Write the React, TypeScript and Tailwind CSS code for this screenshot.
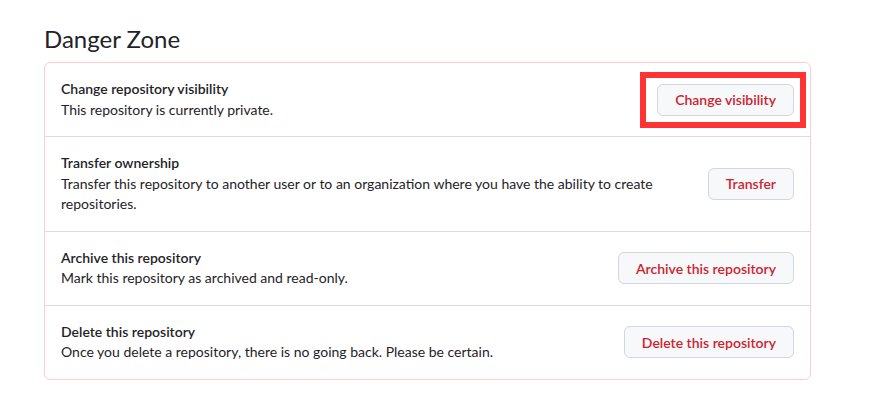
const rows = [
  {
    title: "Change repository visibility",
    desc: "This repository is currently private.",
    action: "Change visibility",
    highlight: true,
  },
  {
    title: "Transfer ownership",
    desc: "Transfer this repository to another user or to an organization where you have the ability to create repositories.",
    action: "Transfer",
  },
  {
    title: "Archive this repository",
    desc: "Mark this repository as archived and read-only.",
    action: "Archive this repository",
  },
  {
    title: "Delete this repository",
    desc: "Once you delete a repository, there is no going back. Please be certain.",
    action: "Delete this repository",
  },
]

export default function App() {
  return (
    <div
      className="min-h-[399px] bg-white pl-[44px] pr-[60px] pt-[24px] text-[#1f2328]"
      style={{ fontFamily: '"Segoe UI", Lato, sans-serif' }}
    >
      <h2 className="mb-[8px] text-[24px] leading-[30px] font-normal">Danger Zone</h2>
      <div className="rounded-[6px] border border-[#ffcecb]">
        {rows.map((row, i) => (
          <div
            key={row.title}
            className={`flex items-center gap-4 p-4 ${i > 0 ? "border-t border-[#d8dee4]" : ""}`}
          >
            <div className="flex-1 text-[14px] leading-[20.5px]">
              <div className="font-semibold">{row.title}</div>
              <div>{row.desc}</div>
            </div>
            <div className="relative shrink-0">
              <button className="h-[32px] rounded-[6px] border border-[#d0d7de] bg-[#f6f8fa] px-[17px] text-[14px] font-semibold text-[#cf222e]">
                {row.action}
              </button>
              {row.highlight && (
                <div className="pointer-events-none absolute -top-[12px] -bottom-[12px] -left-[17px] -right-[12px] border-[6px] border-[#ff3333]" />
              )}
            </div>
          </div>
        ))}
      </div>
    </div>
  )
}
